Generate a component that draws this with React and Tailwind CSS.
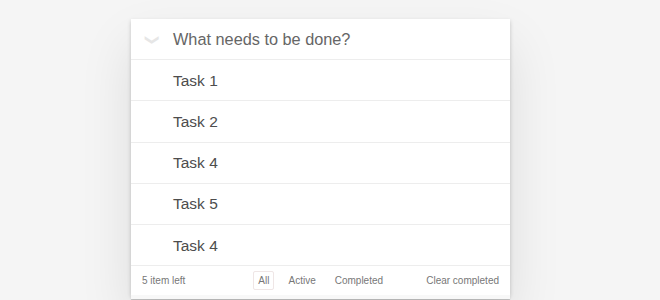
export default function App() {
  const tasks = ["Task 1", "Task 2", "Task 4", "Task 5", "Task 4"];
  return (
    <div
      className="w-[660px] h-[300px] overflow-hidden bg-[#f5f5f5] flex flex-col items-center"
      style={{ fontFamily: '"Liberation Sans", Arial, sans-serif' }}
    >
      <div className="h-[19px] w-full flex justify-center items-end overflow-hidden">
        <span className="text-[100px] leading-none text-[rgba(175,47,47,0.1)] mb-[10px] ml-[24px] tracking-[6px]">
          todos
        </span>
      </div>
      <div className="relative w-[379px] ml-[-19px] bg-white shadow-[0_2px_4px_rgba(0,0,0,0.2),0_25px_50px_rgba(0,0,0,0.1)]">
        <div className="h-[41px] flex items-center border-b border-[#ededed]">
          <div className="w-[42px] flex justify-center">
            <span className="text-[#e6e6e6] text-[14px] rotate-90 inline-block">❯</span>
          </div>
          <span className="text-[16.3px] text-[#666]">What needs to be done?</span>
        </div>
        {tasks.map((t, i) => (
          <div key={i} className="h-[41.3px] flex items-center border-b border-[#ededed]">
            <span className="ml-[42px] text-[15.5px] text-[#4d4d4d]">{t}</span>
          </div>
        ))}
        <div className="relative h-[29px] flex items-center px-[11px] text-[10px] text-[#777]">
          <span>5 item left</span>
          <div className="flex items-center gap-[9px] ml-[68px]">
            <span className="px-[4px] py-[1px] border border-[#efe6e6] rounded-[2px]">All</span>
            <span className="px-[4px] py-[1px] border border-transparent">Active</span>
            <span className="px-[4px] py-[1px] border border-transparent">Completed</span>
          </div>
          <span className="ml-auto">Clear completed</span>
        </div>
        <div className="absolute left-0 right-0 top-full h-[4px] bg-[#f8f8f8] shadow-[0_1px_1px_rgba(0,0,0,0.2),0_4px_0_-3px_#f6f6f6,0_4px_1px_-3px_rgba(0,0,0,0.2)]" />
      </div>
    </div>
  );
}
